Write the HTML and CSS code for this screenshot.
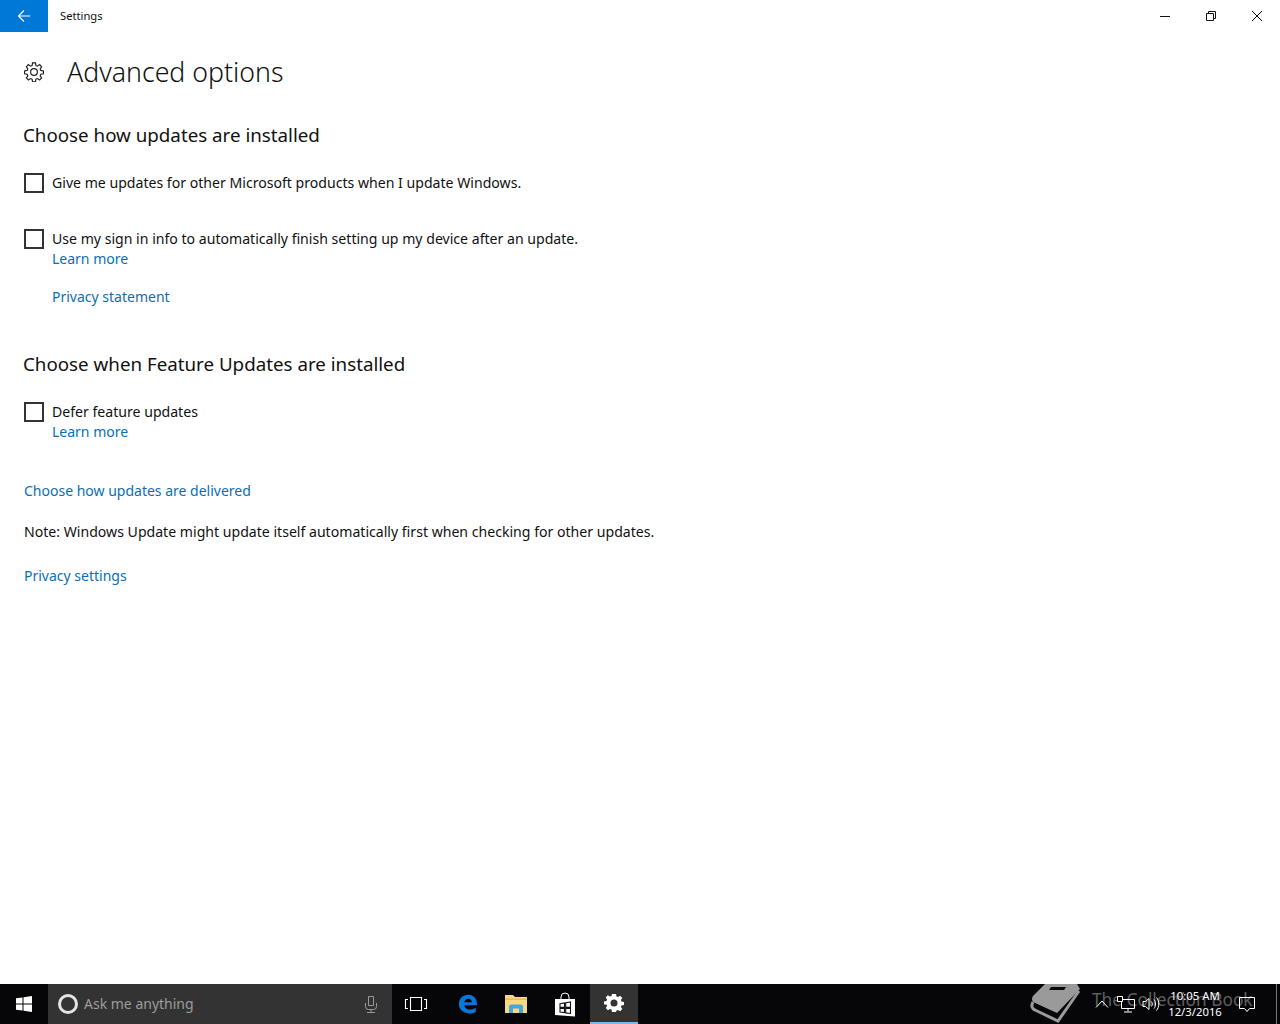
FILE: index.html
```html
<!DOCTYPE html>
<html lang="en">
<head>
<meta charset="utf-8">
<title>Settings</title>
<link rel="stylesheet" href="styles.css">
</head>
<body>
<div class="window">
  <header class="titlebar">
    <div class="back"><svg width="16" height="16" viewBox="0 0 16 16"><path d="M14 8H2.500M8 2.500 2.500 8 8 13.500" fill="none" stroke="#fff" stroke-width="1.100"/></svg></div>
    <div class="apptitle">Settings</div>
    <div class="winctl">
      <div class="ctl"><svg width="12" height="12" viewBox="0 0 12 12"><path d="M1 6.500h10" stroke="#111" fill="none"/></svg></div>
      <div class="ctl"><svg width="12" height="12" viewBox="0 0 12 12"><path d="M1.500 3.500h7v7h-7zM3.500 3.500v-2h7v7h-2" stroke="#111" fill="none"/></svg></div>
      <div class="ctl"><svg width="12" height="12" viewBox="0 0 12 12"><path d="M1 1l10 10M11 1 1 11" stroke="#111" fill="none"/></svg></div>
    </div>
  </header>
  <main class="content">
    <div class="pagehead">
      <svg class="gear" width="20" height="20" viewBox="0 0 22 22"><path d="M9.400 1h3.200l.5 2.900 1.700.7 2.400-1.700 2.200 2.300-1.600 2.400.7 1.700 2.900.5v3.200l-2.900.5-.7 1.700 1.600 2.400-2.200 2.200-2.400-1.600-1.700.7-.5 2.900H9.400l-.5-2.900-1.700-.7-2.400 1.600-2.200-2.200 1.600-2.400-.7-1.700-2.900-.5V9.800l2.900-.5.7-1.700-1.600-2.400 2.200-2.300 2.400 1.700 1.700-.7z" fill="none" stroke="#222" stroke-width="1.300"/><circle cx="11" cy="11" r="3.700" fill="none" stroke="#222" stroke-width="1.300"/></svg>
      <h1>Advanced options</h1>
    </div>
    <h2>Choose how updates are installed</h2>
    <div class="check first"><span class="box"></span><span>Give me updates for other Microsoft products when I update Windows.</span></div>
    <div class="check second"><span class="box"></span><span>Use my sign in info to automatically finish setting up my device after an update.</span></div>
    <a class="link sub">Learn more</a>
    <a class="link sub privacy">Privacy statement</a>
    <h2 class="h2b">Choose when Feature Updates are installed</h2>
    <div class="check first"><span class="box"></span><span>Defer feature updates</span></div>
    <a class="link sub">Learn more</a>
    <a class="link top delivered">Choose how updates are delivered</a>
    <p class="note">Note: Windows Update might update itself automatically first when checking for other updates.</p>
    <a class="link top settings">Privacy settings</a>
  </main>
</div>
<footer class="taskbar">
  <div class="start"><svg width="16" height="16" viewBox="0 0 16 16"><path d="M0 2.300 6.500 1.400V7.500H0zM7.500 1.200 16 0V7.500H7.500zM0 8.500H6.500V14.600L0 13.700zM7.500 8.500H16V16L7.500 14.800z" fill="#fff"/></svg></div>
  <div class="search">
    <span class="cortana"></span>
    <span class="ask">Ask me anything</span>
    <svg class="mic" width="14" height="18" viewBox="0 0 14 18"><path d="M4.500 1.500h5v9h-5zM1.500 8v3.500a3 3 0 0 0 3 3h5a3 3 0 0 0 3-3V8M7 14.500v3M3 17.500h8" fill="none" stroke="#9a9a9a"/></svg>
  </div>
  <div class="tb view"><svg width="24" height="16" viewBox="0 0 24 16"><path d="M6.500 1.500h11v13h-11zM4 3.500H1.500v9H4M20 3.500h2.500v9H20" fill="none" stroke="#fff" stroke-width="1.100"/></svg></div>
  <div class="tb edge"><svg width="20" height="20" viewBox="0 0 22 22"><path d="M1 11C1 4.800 5.500.8 11.300.8 17.500.8 21 5.300 21 12.500H7c.3 3 2.600 4.600 5.700 4.600 2.600 0 4.800-.8 6.800-2.100v4.700c-2 1.200-4.600 1.800-7.500 1.800C5.400 20.500 1 17 1 11zM7 9h8.300c-.2-2.400-1.800-3.900-4-3.900C9.100 5.100 7.400 6.600 7 9z" fill="#0a78d2"/></svg></div>
  <div class="tb folder"><svg width="22" height="18" viewBox="0 0 22 18"><path d="M0 0h8l2 2h12v16H0z" fill="#f8d880"/><path d="M0 3.500h22V5H0z" fill="#e6bd58"/><path d="M4 18V12q0-2.500 2.500-2.500h9Q18 9.500 18 12v6h-4v-4.500H8V18z" fill="#46a5dc"/></svg></div>
  <div class="tb store"><svg width="22" height="25" viewBox="0 0 22 25"><path d="M7 7V5a4 4 0 0 1 8 0v2" fill="none" stroke="#fff" stroke-width="1"/><path d="M1 7h20v17.500L1 23z" fill="#fff"/><path d="M6 11.800 10.500 11v4.200H6zM11.700 10.800l4.800-.8v5.200h-4.800zM6 16.400h4.500v4.200L6 20.100zM11.700 16.400h4.800v5.100l-4.800-.6z" fill="#fff" stroke="#111" stroke-width="1.100"/></svg></div>
  <div class="tb active"><svg width="20" height="20" viewBox="0 0 20 20"><path fill-rule="evenodd" d="M8 1h4l.5 2.500 1.500.6 2.200-1.400 2.100 2.200-1.400 2.100.6 1.500 2.500.5v3l-2.500.5-.6 1.500 1.400 2.100-2.100 2.200-2.200-1.400-1.500.6L12 19H8l-.5-2.500-1.500-.6-2.200 1.400-2.100-2.200 1.400-2.100-.6-1.500L0 11.500v-3l2.500-.5.600-1.500L1.700 4.400l2.100-2.200L6 3.600l1.500-.6zM10 6.500a3.500 3.500 0 1 0 0 7 3.500 3.500 0 0 0 0-7z" fill="#fff"/></svg></div>
  <div class="watermark">
    <svg width="52" height="42" viewBox="0 0 52 42"><path d="M15 2H47l3 5-23 24L3 20q-2-3 0-6z" fill="#9a9a9a"/><path d="M21 5H36l-2 3H19z" fill="#0a0a0a"/><path d="M3 20q-3 6 2 8l23 11L49 9" fill="none" stroke="#9a9a9a" stroke-width="3"/></svg>
    <span>The Collection Book</span>
  </div>
  <div class="tray">
    <svg class="chev" width="14" height="8" viewBox="0 0 14 8"><path d="M1 7.500 7 1l6 6.500" fill="none" stroke="#fff"/></svg>
    <svg class="net" width="18" height="17" viewBox="0 0 18 17"><path d="M4.500 3.500h13v9h-13zM11 12.500v3M7 16h8" fill="none" stroke="#fff"/><path d="M.5.500h5v5h-5z" fill="#000" stroke="#fff"/></svg>
    <svg class="vol" width="18" height="16" viewBox="0 0 18 16"><path d="M1 5.500h2.500L7 2.500v11L3.500 10.500H1zM9.500 5.500c1 1.500 1 3.500 0 5M12 3.500c2 2.500 2 6.500 0 9M14.500 1.500c3 3.500 3 9.500 0 13" fill="none" stroke="#fff"/></svg>
    <div class="clock"><div>10:05 AM</div><div>12/3/2016</div></div>
    <svg class="notif" width="16" height="15" viewBox="0 0 16 15"><path d="M.5.500h15v11h-5l-2.500 3-2.500-3h-5z" fill="none" stroke="#fff"/></svg>
    <span class="showdesk"></span>
  </div>
</footer>
</body>
</html>
```
FILE: styles.css
```css
* { box-sizing: border-box; }
html, body { margin: 0; padding: 0; }
body {
  width: 1280px; height: 1024px; overflow: hidden; background: #fff; color: #000;
  font-family: "Noto Sans", "Open Sans", "Liberation Sans", sans-serif;
  display: flex; flex-direction: column;
}
.window { flex: 1; min-height: 0; }
.titlebar { display: flex; align-items: center; height: 32px; }
.back { width: 48px; height: 32px; background: #0078d7; display: flex; align-items: center; justify-content: center; }
.apptitle { margin-left: 12px; margin-bottom: 1px; font-size: 11.200px; line-height: 32px; color: #111; }
.winctl { margin-left: auto; display: flex; }
.ctl { width: 46px; height: 32px; display: flex; align-items: center; justify-content: center; }
.content { padding-left: 24px; }
.pagehead { display: flex; align-items: center; height: 40px; margin-top: 20px; }
.gear { flex: none; }
h1 { margin: 0 0 0 23px; font-weight: 300; font-size: 26.700px; line-height: 40px; color: #111; }
h2 { margin: 30px 0 0 -1px; font-weight: 400; font-size: 18.750px; line-height: 26px; color: #111; }
.h2b { margin-top: 44px; }
.check { display: flex; align-items: center; height: 20px; font-size: 14.100px; line-height: 20px; color: #111; }
.check.first { margin-top: 25px; }
.check.second { margin-top: 36px; }
.box { flex: none; width: 20px; height: 20px; border: 2px solid #333; margin-right: 8px; }
.link { display: block; color: #0a6fb5; font-size: 14px; line-height: 20px; }
.sub { margin-left: 28px; }
.privacy { margin-top: 18px; }
.delivered { margin-top: 39px; }
.note { margin: 21px 0 0; font-size: 14.100px; line-height: 20px; color: #111; }
.settings { margin-top: 24px; }
.taskbar { position: relative; flex: none; height: 40px; background: #060608; display: flex; align-items: center; }
.start { width: 48px; height: 40px; display: flex; align-items: center; justify-content: center; }
.search { width: 344px; height: 40px; background: #333; display: flex; align-items: center; padding: 0 14px 0 10px; }
.cortana { width: 20px; height: 20px; border: 3px solid #e4e4e4; border-radius: 50%; flex: none; }
.ask { margin-left: 6px; margin-bottom: 2px; font-size: 14px; color: #9c9c9c; }
.mic { margin-left: auto; }
.tb { width: 49px; height: 40px; display: flex; align-items: center; justify-content: center; }
.view { width: 48px; }
.edge { margin-left: 3px; }
.folder { width: 48px; }
.store { width: 50px; }
.active { width: 48px; background: #333; border-bottom: 2px solid #76b9ed; }
.tray { margin-left: auto; display: flex; align-items: center; height: 40px; padding-right: 3px; position: relative; }
.net { margin-left: 8px; }
.vol { margin-left: 7px; }
.clock { width: 62px; margin-left: 4px; text-align: center; font-size: 11.300px; line-height: 16px; color: #fff; white-space: nowrap; }
.notif { margin-left: 13px; }
.showdesk { width: 1px; height: 40px; background: #777; margin-left: 21px; }
.watermark { position: absolute; left: 1030px; top: -2px; display: flex; align-items: center; gap: 10px; color: #5e5e5e; font-size: 17.300px; white-space: nowrap; }
.watermark span { margin-bottom: 8px; }
```
